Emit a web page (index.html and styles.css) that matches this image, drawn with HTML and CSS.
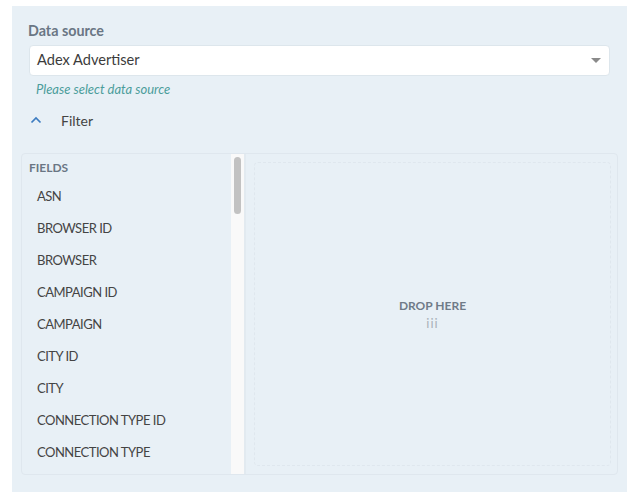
FILE: index.html
```html
<!DOCTYPE html>
<html>
<head>
<meta charset="utf-8">
<link rel="stylesheet" href="styles.css">
</head>
<body>
<div class="panel">
  <div class="label">Data source</div>
  <div class="select">
    <span class="select-text">Adex Advertiser</span>
    <span class="caret"></span>
  </div>
  <div class="hint">Please select data source</div>
  <div class="filter-toggle">
    <svg class="chev" width="12" height="8" viewBox="0 0 12 8"><path d="M1.5 6.5 L6 2 L10.5 6.5" fill="none" stroke="#3d7cc0" stroke-width="1.7"/></svg>
    <span>Filter</span>
  </div>
  <div class="filter-box">
    <div class="fields">
      <div class="fields-list">
        <div class="fields-head">FIELDS</div>
        <div class="field">ASN</div>
        <div class="field">BROWSER ID</div>
        <div class="field">BROWSER</div>
        <div class="field">CAMPAIGN ID</div>
        <div class="field">CAMPAIGN</div>
        <div class="field">CITY ID</div>
        <div class="field">CITY</div>
        <div class="field">CONNECTION TYPE ID</div>
        <div class="field">CONNECTION TYPE</div>
      </div>
      <div class="scrolltrack"><div class="thumb"></div></div>
    </div>
    <div class="drop-wrap">
      <div class="drop">
        <div class="drop-title">DROP HERE</div>
        <div class="drop-icon">iii</div>
      </div>
    </div>
  </div>
</div>
</body>
</html>
```

FILE: styles.css
```css
html, body {
  margin: 0;
  padding: 0;
  background: #ffffff;
}
body {
  font-family: Lato, "Open Sans", sans-serif;
  width: 632px;
  height: 501px;
  overflow: hidden;
}
.panel {
  margin: 6px 5px 0 12px;
  height: 486px;
  background: #e8f0f6;
  padding: 16px 9px 0 9px;
  box-sizing: border-box;
}
.label {
  margin-left: 7px;
  font-size: 14.3px;
  font-weight: 700;
  color: #6a7684;
  line-height: 17px;
}
.select {
  margin: 6px 8px 0 8px;
  height: 31px;
  background: #fff;
  border: 1px solid #dde6ec;
  border-radius: 4px;
  box-sizing: border-box;
  display: flex;
  align-items: center;
  padding: 0 8px 2px 7px;
}
.select-text {
  flex: 1;
  font-size: 14.6px;
  color: #3c3c3c;
}
.caret {
  width: 0;
  height: 0;
  border-left: 5px solid transparent;
  border-right: 5px solid transparent;
  border-top: 5px solid #8a8a8a;
  margin-top: 2px;
}
.hint {
  margin: 6px 0 0 15px;
  font-size: 13px;
  font-style: italic;
  color: #4b9d9b;
  line-height: 15px;
}
.filter-toggle {
  margin: 14px 0 0 9px;
  display: flex;
  align-items: center;
  height: 18px;
  font-size: 14px;
  color: #444;
}
.chev {
  margin-right: 19px;
}
.filter-box {
  margin-top: 24px;
  height: 322px;
  border: 1px solid #dfe7ee;
  border-radius: 4px;
  box-sizing: border-box;
  display: flex;
}
.fields {
  width: 222px;
  display: flex;
  border-right: 2px solid #e2eaf0;
}
.fields-list {
  flex: 1;
  padding: 7px 0 0 7px;
  overflow: hidden;
}
.fields-head {
  font-size: 12px;
  font-weight: 700;
  color: #6a7684;
  line-height: 13px;
}
.field {
  margin-left: 8px;
  height: 32px;
  line-height: 32px;
  font-size: 13px;
  color: #444;
  letter-spacing: -0.5px;
}
.fields-head + .field {
  margin-top: 6px;
}
.scrolltrack {
  width: 13px;
  background: #f9f9f9;
  padding: 3px 3px 0 3px;
  box-sizing: border-box;
}
.thumb {
  width: 7px;
  height: 57px;
  border-radius: 4px;
  background: #c2c2c2;
}
.drop-wrap {
  flex: 1;
  padding: 8px 6px 8px 8px;
  display: flex;
}
.drop {
  flex: 1;
  border: 1px dashed #dfe7ee;
  border-radius: 4px;
  display: flex;
  flex-direction: column;
  align-items: center;
  justify-content: center;
}
.drop-title {
  font-size: 12px;
  font-weight: 700;
  color: #6f7b88;
  line-height: 15px;
}
.drop-icon {
  margin-top: 4px;
  font-size: 13px;
  color: #a9b1b9;
  line-height: 13px;
  letter-spacing: 1px;
}
```
